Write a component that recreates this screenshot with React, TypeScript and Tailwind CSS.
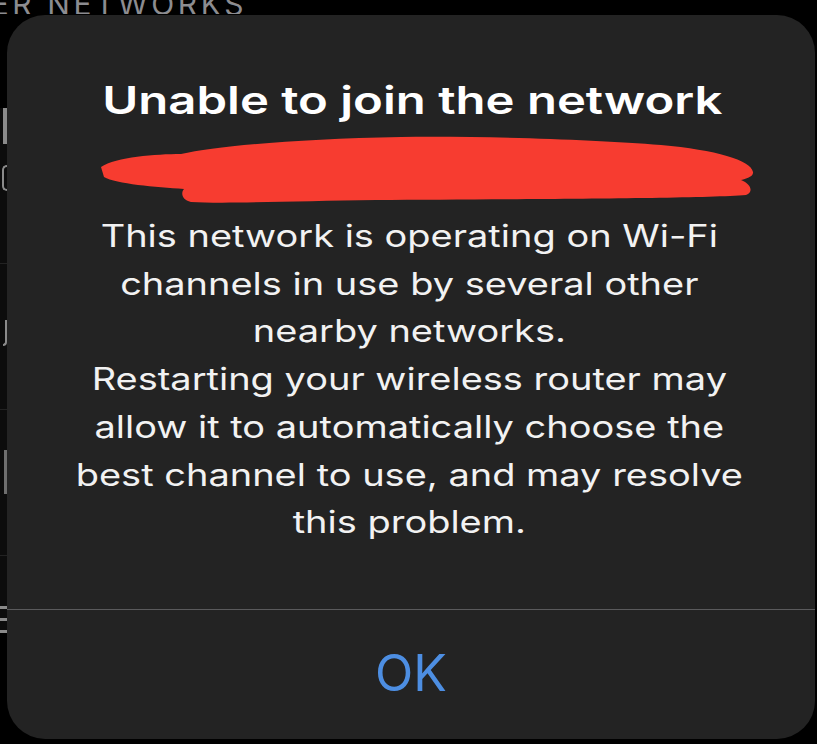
import React from "react";

const bodyLines = [
  "This network is operating on Wi-Fi",
  "channels in use by several other",
  "nearby networks.",
  "Restarting your wireless router may",
  "allow it to automatically choose the",
  "best channel to use, and may resolve",
  "this problem.",
];

function Scribble() {
  return (
    <svg width="665" height="77" viewBox="0 0 665 77" className="block">
      <path
        d="M5 35 C20 25 60 22 85 22 C120 14 200 7 305 5 C400 4 500 8 565 13 C620 18 655 28 657 40 C658 45 648 47 645 48 C655 52 658 60 650 63 C600 67 400 67 280 68 C200 69 130 72 95 70 C85 68 85 60 88 57 C60 55 20 52 8 45 Z"
        fill="#f73c30"
      />
    </svg>
  );
}

function BackgroundList() {
  // the settings list behind the alert, only its edges show
  return (
    <div className="flex flex-col h-full font-['Inter',sans-serif] text-[#8c8c90]">
      <div className="h-[14px] overflow-hidden">
        <div className="flex justify-end w-[247px] -mt-[10px] whitespace-nowrap">
          <span className="text-[30px] tracking-[0.12em] leading-[28px]">
            OTHER NETWORKS
          </span>
        </div>
      </div>
      <div className="flex flex-col w-[7px] mt-[94px] bg-[#0c0c0c]">
        <div className="h-[36px] w-[4px] ml-[3px] bg-[#8a8a8a]" />
        <div className="h-[21px]" />
        <div className="h-[26px] w-[5px] ml-[2px] border-2 border-r-0 border-[#8a8a8a] rounded-l-full" />
        <div className="h-[73px] border-b border-[#222]" />
        <div className="h-[56px]" />
        <div className="h-[26px] w-[4px] ml-[3px] border-b-2 border-r-2 border-[#8a8a8a] rounded-br-full" />
        <div className="h-[64px] border-b border-[#222]" />
        <div className="h-[40px]" />
        <div className="h-[44px] w-[3px] ml-[4px] bg-[#6e6e6e]" />
        <div className="h-[62px] border-b border-[#222]" />
        <div className="h-[50px]" />
        <div className="h-[3px] bg-[#8a8a8a]" />
        <div className="h-[9px]" />
        <div className="h-[3px] bg-[#8a8a8a]" />
        <div className="h-[9px]" />
        <div className="h-[3px] bg-[#8a8a8a]" />
      </div>
    </div>
  );
}

export default function App() {
  return (
    <div className="relative w-[817px] h-[744px] bg-black overflow-hidden">
      <BackgroundList />

      <div className="absolute left-[7px] top-[15px] w-[808px] h-[724px] rounded-[38px] bg-[#232323] flex flex-col font-['Inter',sans-serif]">
        <div className="flex-1 flex flex-col items-center pt-[62px]">
          <h1 className="text-white text-[38px] leading-[46px] font-semibold scale-x-[1.29] ml-[2px]">
            Unable to join the network
          </h1>
          <div className="mt-[9px] ml-[34px]">
            <Scribble />
          </div>
          <div className="mt-[3px] flex flex-col items-center text-[#f2f2f2] text-[31px] leading-[47.7px] scale-x-[1.225] ml-[-4px]">
            {bodyLines.map((line) => (
              <p key={line} className="whitespace-nowrap">
                {line}
              </p>
            ))}
          </div>
        </div>
        <div className="h-[1px] bg-[#5a5a5c]" />
        <div className="h-[129px] flex items-center justify-center">
          <span className="text-[#4d8ee2] text-[50px] leading-none pb-[4px]">
            OK
          </span>
        </div>
      </div>
    </div>
  );
}
